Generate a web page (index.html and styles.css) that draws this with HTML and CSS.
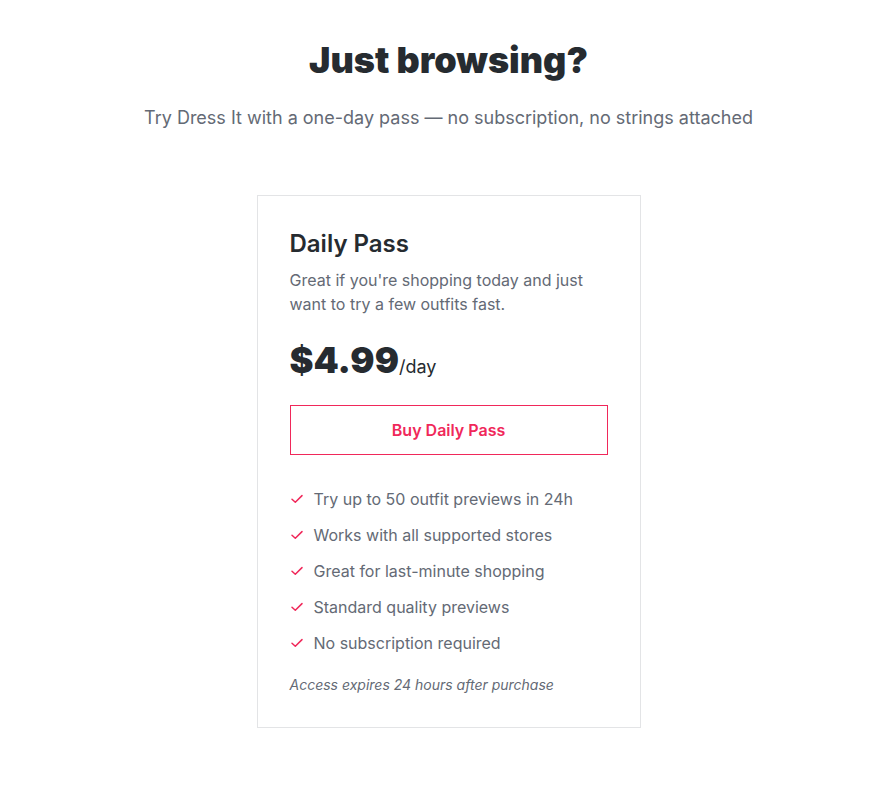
FILE: index.html
```html
<!DOCTYPE html>
<html lang="en">
<head>
<meta charset="utf-8">
<title>Daily Pass</title>
<link rel="stylesheet" href="styles.css">
</head>
<body>
<main class="page">
  <header class="intro">
    <h1 class="intro-title">Just browsing?</h1>
    <p class="intro-sub">Try Dress It with a one-day pass — no subscription, no strings attached</p>
  </header>
  <section class="card">
    <h2 class="card-title">Daily Pass</h2>
    <p class="card-desc">Great if you're shopping today and just want to try a few outfits fast.</p>
    <div class="price"><span class="price-amount">$4.99</span><span class="price-unit">/day</span></div>
    <button class="buy" type="button">Buy Daily Pass</button>
    <ul class="features">
      <li class="feature"><svg class="check" viewBox="0 0 14 14" width="14" height="14"><path d="M2 7.2 L5.3 10.3 L12 3.6" fill="none" stroke="currentColor" stroke-width="1.5" stroke-linecap="round" stroke-linejoin="round"/></svg>Try up to 50 outfit previews in 24h</li>
      <li class="feature"><svg class="check" viewBox="0 0 14 14" width="14" height="14"><path d="M2 7.2 L5.3 10.3 L12 3.6" fill="none" stroke="currentColor" stroke-width="1.5" stroke-linecap="round" stroke-linejoin="round"/></svg>Works with all supported stores</li>
      <li class="feature"><svg class="check" viewBox="0 0 14 14" width="14" height="14"><path d="M2 7.2 L5.3 10.3 L12 3.6" fill="none" stroke="currentColor" stroke-width="1.5" stroke-linecap="round" stroke-linejoin="round"/></svg>Great for last-minute shopping</li>
      <li class="feature"><svg class="check" viewBox="0 0 14 14" width="14" height="14"><path d="M2 7.2 L5.3 10.3 L12 3.6" fill="none" stroke="currentColor" stroke-width="1.5" stroke-linecap="round" stroke-linejoin="round"/></svg>Standard quality previews</li>
      <li class="feature"><svg class="check" viewBox="0 0 14 14" width="14" height="14"><path d="M2 7.2 L5.3 10.3 L12 3.6" fill="none" stroke="currentColor" stroke-width="1.5" stroke-linecap="round" stroke-linejoin="round"/></svg>No subscription required</li>
    </ul>
    <p class="note">Access expires 24 hours after purchase</p>
  </section>
</main>
</body>
</html>
```

FILE: styles.css
```css
* { box-sizing: border-box; }
html, body { margin: 0; padding: 0; background: #ffffff; }
body {
  font-family: Inter, "Noto Sans", sans-serif;
  color: #282d32;
}
.page {
  display: flex;
  flex-direction: column;
  align-items: center;
  padding: 38px 0 0 8px;
}
.intro { text-align: center; }
.intro-title {
  margin: 0;
  font-size: 36px;
  line-height: 44px;
  font-weight: 900;
  color: #262b30;
}
.intro-sub {
  margin: 23px 0 0;
  font-size: 18px;
  line-height: 26px;
  color: #646a75;
}
.card {
  margin-top: 64px;
  width: 384px;
  border: 1px solid #e3e4e6;
  padding: 32px 32px 32px;
}
.card-title {
  margin: 0;
  font-size: 24px;
  line-height: 32px;
  font-weight: 600;
  color: #262b30;
}
.card-desc {
  margin: 8px 0 0;
  font-size: 16px;
  line-height: 24px;
  color: #646a75;
}
.price {
  margin-top: 20px;
  display: flex;
  align-items: baseline;
  height: 48px;
}
.price-amount {
  font-size: 36px;
  line-height: 48px;
  font-weight: 900;
  color: #262b30;
}
.price-unit {
  font-size: 18px;
  color: #262b30;
}
.buy {
  display: block;
  margin-top: 21px;
  width: 100%;
  height: 50px;
  background: #fff;
  border: 1px solid #f0285a;
  color: #f0285a;
  font-family: inherit;
  font-size: 16px;
  font-weight: 600;
  cursor: pointer;
}
.features {
  list-style: none;
  margin: 32px 0 0;
  padding: 0;
  display: flex;
  flex-direction: column;
  gap: 12px;
}
.feature {
  display: flex;
  align-items: center;
  gap: 10px;
  font-size: 16px;
  line-height: 24px;
  color: #646a75;
}
.check { color: #f0285a; flex: none; }
.note {
  margin: 20px 0 0;
  font-size: 14px;
  line-height: 20px;
  font-style: italic;
  color: #646a75;
}
```
